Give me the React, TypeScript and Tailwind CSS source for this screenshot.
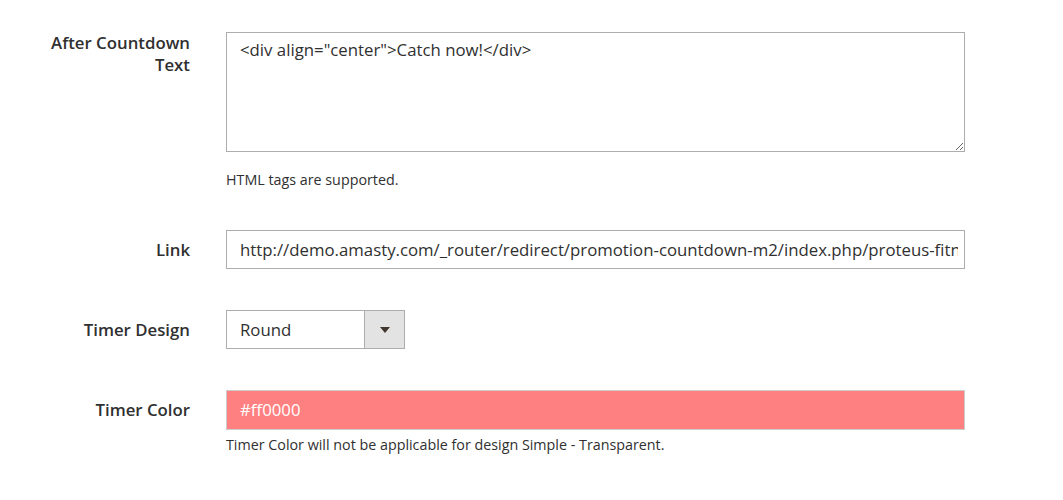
import React from "react";

const font = { fontFamily: '"Open Sans", "Noto Sans", sans-serif' };

export default function App() {
  return (
    <div className="w-[1063px] h-[500px] bg-white text-[#303030]" style={font}>
      <div className="pt-[32px] flex flex-col">
        {/* After Countdown Text */}
        <div className="flex">
          <div className="w-[190px] shrink-0 text-right font-semibold text-[16.8px] leading-[22px] text-[#303030]">
            After Countdown
            <br />
            Text
          </div>
          <div className="ml-[36px] w-[739px]">
            <textarea
              className="block w-[739px] h-[120px] border border-[#adadad] px-[13px] pt-[6px] text-[16.8px] leading-[22px] text-[#303030] resize-y outline-none"
              defaultValue={'<div align="center">Catch now!</div>'}
              style={font}
            />
            <div className="mt-[19px] text-[14.3px] leading-[18px] text-[#303030]">HTML tags are supported.</div>
          </div>
        </div>

        {/* Link */}
        <div className="flex items-center mt-[41px]">
          <div className="w-[190px] shrink-0 text-right font-semibold text-[16.8px] leading-[22px]">Link</div>
          <div className="ml-[36px] w-[739px]">
            <input
              className="block w-[739px] h-[39px] border border-[#adadad] pl-[13px] pr-[6px] text-[16.8px] text-[#303030] outline-none"
              defaultValue="http://demo.amasty.com/_router/redirect/promotion-countdown-m2/index.php/proteus-fitness-jackshirt.html"
              style={font}
            />
          </div>
        </div>

        {/* Timer Design */}
        <div className="flex items-center mt-[41px]">
          <div className="w-[190px] shrink-0 text-right font-semibold text-[16.8px] leading-[22px]">Timer Design</div>
          <div className="ml-[36px] flex w-[179px] h-[39px] border border-[#adadad]">
            <div className="flex-1 flex items-center px-[13px] text-[16.8px] text-[#303030]">Round</div>
            <div className="w-[40px] border-l border-[#adadad] bg-[#e3e3e3] flex items-center justify-center">
              <svg width="10" height="6" viewBox="0 0 10 6">
                <path d="M0 0 L10 0 L5 6 Z" fill="#41362f" />
              </svg>
            </div>
          </div>
        </div>

        {/* Timer Color */}
        <div className="flex mt-[41px]">
          <div className="w-[190px] shrink-0 text-right font-semibold text-[16.8px] leading-[40px]">Timer Color</div>
          <div className="ml-[36px] w-[739px]">
            <div className="h-[40px] bg-[#ff8080] border border-[#cccccc] flex items-center px-[13px] text-[16.8px] text-white">
              #ff0000
            </div>
            <div className="mt-[6px] text-[14.3px] leading-[18px] text-[#303030]">
              Timer Color will not be applicable for design Simple - Transparent.
            </div>
          </div>
        </div>
      </div>
    </div>
  );
}
